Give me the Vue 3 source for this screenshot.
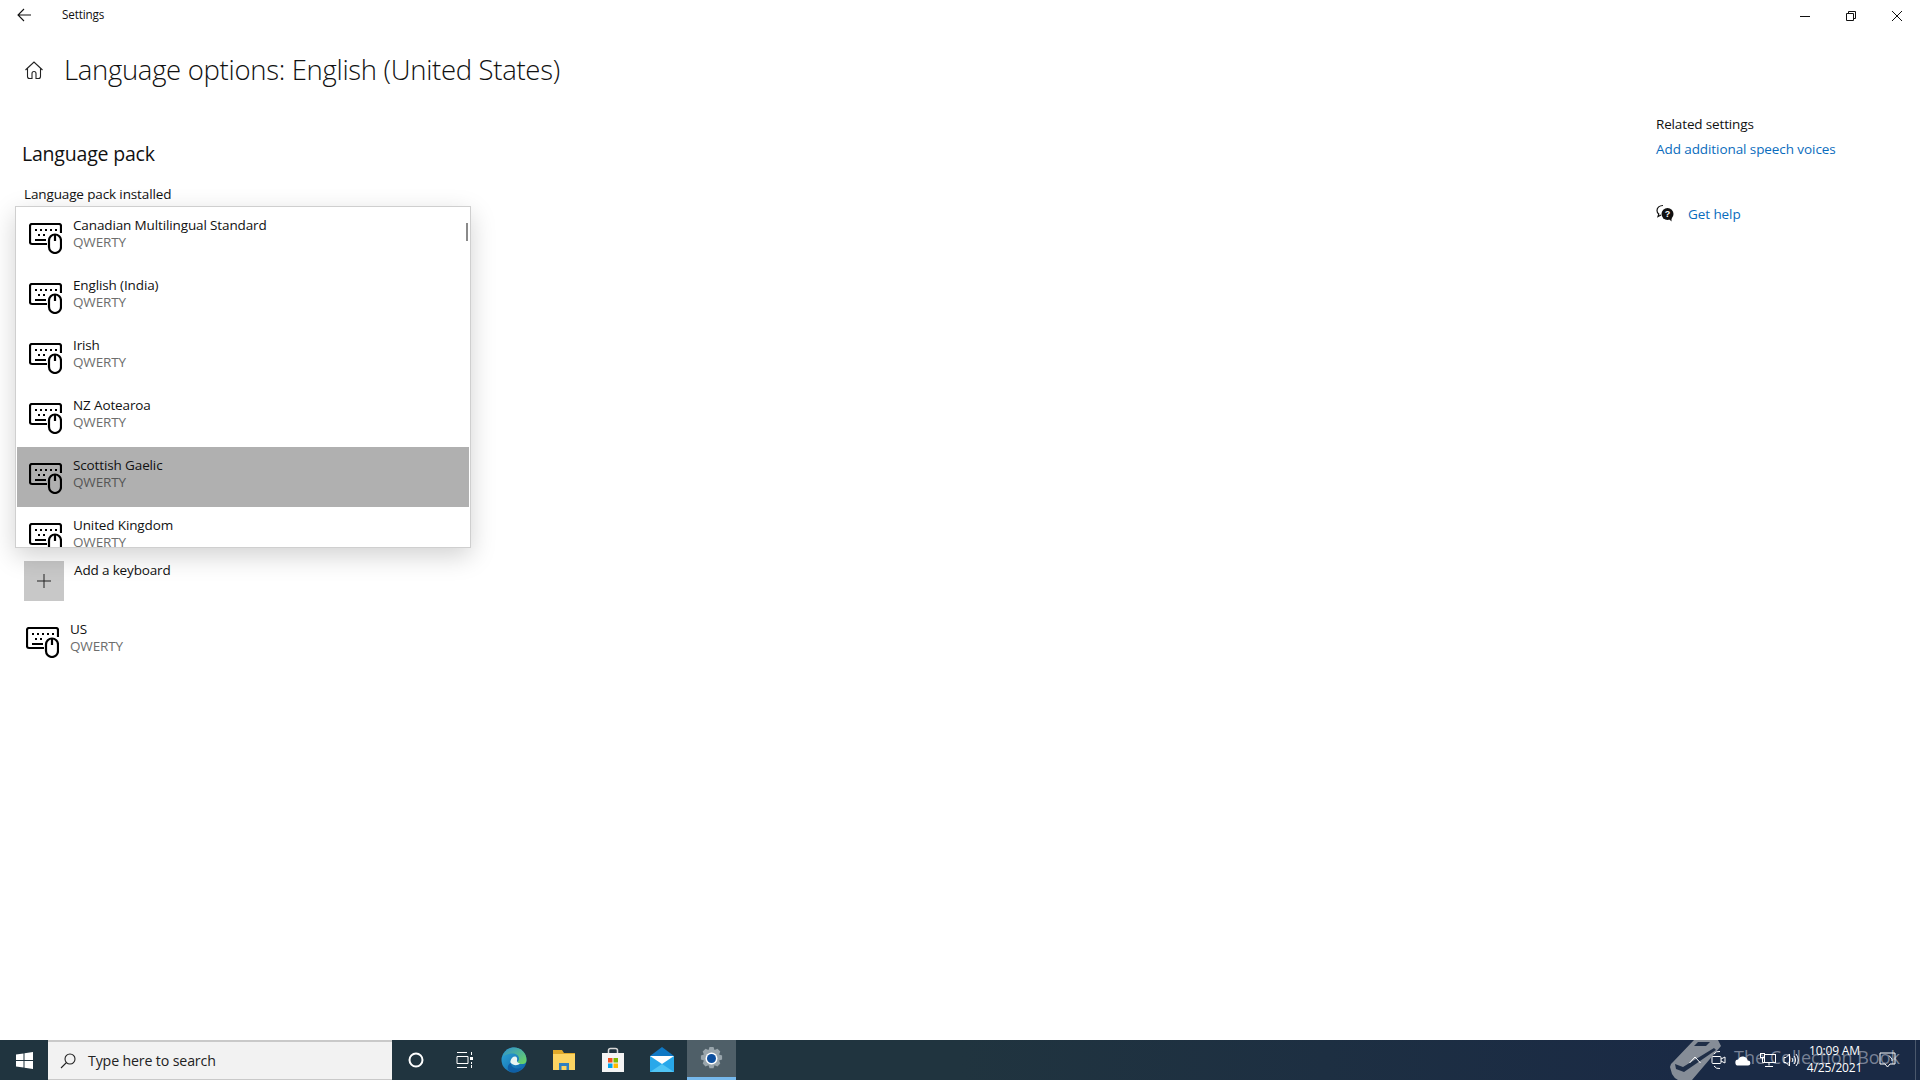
<script setup>
const layouts = ['Canadian Multilingual Standard', 'English (India)', 'Irish', 'NZ Aotearoa', 'Scottish Gaelic', 'United Kingdom']
</script>

<template>
  <div class="screen">
    <svg class="defs" width="0" height="0">
      <symbol id="kbd" viewBox="0 0 33 31">
        <g fill="none" stroke="#000" stroke-width="2.200">
          <path d="M18 21H3a2 2 0 0 1-2-2V3a2 2 0 0 1 2-2h27a2 2 0 0 1 2 2v7" />
          <rect x="20" y="11.500" width="12" height="18.500" rx="6" />
          <path d="M26 11v7M6 17h11" />
        </g>
        <g fill="#000">
          <rect x="6" y="6" width="2" height="2" /><rect x="11" y="6" width="2" height="2" />
          <rect x="16" y="6" width="2" height="2" /><rect x="21" y="6" width="2" height="2" />
          <rect x="26" y="6" width="2" height="2" /><rect x="9" y="11" width="2" height="2" />
          <rect x="14" y="11" width="2" height="2" />
        </g>
      </symbol>
    </svg>

    <header class="titlebar">
      <svg class="back" width="16" height="14" viewBox="0 0 16 14" fill="none" stroke="#111" stroke-width="1.100">
        <path d="M1 7h13M7 1 1 7l6 6" />
      </svg>
      <span class="app-name">Settings</span>
      <div class="win-controls">
        <svg width="12" height="12" viewBox="0 0 12 12" fill="none" stroke="#111"><path d="M1 6.500h10" /></svg>
        <svg width="12" height="12" viewBox="0 0 12 12" fill="none" stroke="#111"><path d="M1.500 3.500h7v7h-7zM3.500 3.500v-2h7v7h-2" /></svg>
        <svg width="12" height="12" viewBox="0 0 12 12" fill="none" stroke="#111"><path d="m1 1 10 10M11 1 1 11" /></svg>
      </div>
    </header>

    <main class="content">
      <section class="left">
        <div class="page-head">
          <svg width="20" height="20" viewBox="0 0 20 20" fill="none" stroke="#222" stroke-width="1.100">
            <path d="M1.500 10 10 2l8.500 8M3.500 8.500V16.500a2 2 0 0 0 2 2h2.500v-5a2 2 0 0 1 4 0v5h2.500a2 2 0 0 0 2-2V8.500" />
          </svg>
          <h1>Language options: English (United States)</h1>
        </div>
        <h2>Language pack</h2>
        <div class="installed">Language pack installed</div>

        <div class="add-row">
          <div class="plus-tile">
            <svg width="14" height="14" viewBox="0 0 14 14" stroke="#222" fill="none"><path d="M7 0v14M0 7h14" /></svg>
          </div>
          <span>Add a keyboard</span>
        </div>
        <div class="us-row">
          <svg class="kicon" width="33" height="31"><use href="#kbd" /></svg>
          <div class="row-text">
            <div class="row-title">US</div>
            <div class="row-sub">QWERTY</div>
          </div>
        </div>

        <div class="popup">
          <div class="scroll-thumb"></div>
          <div v-for="name in layouts" :key="name" class="row" :class="{ selected: name === 'Scottish Gaelic' }">
            <svg class="kicon" width="33" height="31"><use href="#kbd" /></svg>
            <div class="row-text">
              <div class="row-title">{{ name }}</div>
              <div class="row-sub">QWERTY</div>
            </div>
          </div>
        </div>
      </section>

      <aside class="right">
        <div class="related">Related settings</div>
        <a class="link">Add additional speech voices</a>
        <div class="help">
          <svg width="18" height="18" viewBox="0 0 18 18">
            <path d="M7 1.500C3.500 1.500 1 3.500 1 6.500c0 1.500.7 2.700 1.800 3.500L2 12.500l3-1.500" fill="none" stroke="#111" stroke-width="1.200" />
            <circle cx="11.500" cy="10" r="6" fill="#111" />
            <path d="m13 15 2.500 2.500V13z" fill="#111" />
            <text x="11.500" y="13" text-anchor="middle" font-size="9" font-weight="700" fill="#fff" font-family="Liberation Sans, sans-serif">?</text>
          </svg>
          <a class="link">Get help</a>
        </div>
      </aside>
    </main>

    <footer class="taskbar">
      <div class="start">
        <svg width="17" height="17" viewBox="0 0 17 17" fill="#fff">
          <path d="M0 2.500 7.500 1.400V8H0zM8.500 1.300 17 0v8H8.500zM0 9h7.500v6.600L0 14.500zM8.500 9H17v8l-8.500-1.300z" />
        </svg>
      </div>
      <div class="search">
        <svg width="16" height="16" viewBox="0 0 16 16" fill="none" stroke="#222" stroke-width="1.100">
          <circle cx="10" cy="6" r="5" /><path d="M6.500 9.500 1 15" />
        </svg>
        <span>Type here to search</span>
      </div>
      <div class="tb-icons">
        <div class="tb-item">
          <svg width="18" height="18" viewBox="0 0 18 18" fill="none" stroke="#fff" stroke-width="2"><circle cx="9" cy="9" r="6.500" /></svg>
        </div>
        <div class="tb-item">
          <svg width="18" height="18" viewBox="0 0 18 18" fill="none" stroke="#fff">
            <path d="M1 1.500h10M1 16.500h10M1 5.500h11v7H1zM15.500 1v3M15.500 14v3" /><rect x="14" y="6" width="3" height="3" fill="#fff" stroke="none" /><path d="M15.500 11v2" />
          </svg>
        </div>
        <div class="tb-item">
          <svg width="26" height="26" viewBox="0 0 26 26">
            <defs>
              <linearGradient id="edgeA" x1="0" y1="0" x2="1" y2="1">
                <stop offset="0" stop-color="#2fa9d8" /><stop offset="1" stop-color="#0d5fa8" />
              </linearGradient>
              <linearGradient id="edgeB" x1="0" y1="0" x2="1" y2="1">
                <stop offset="0" stop-color="#2f8fd0" /><stop offset="1" stop-color="#6ed85f" />
              </linearGradient>
            </defs>
            <circle cx="13" cy="13" r="12.500" fill="url(#edgeA)" />
            <path d="M2 9C4 3 9 .5 13 .5c7 0 12.500 5.500 12.500 12.500 0 2-1 4-4 4-3 0-5 0-5-2 1-1 1.500-2 1.500-3.500C18 8 14 6 10 6.500 6.500 7 3.500 8 2 9z" fill="url(#edgeB)" />
            <path d="M9.500 14c.5-3 3-5 5-4.500 1.500.5 2 2 1.500 3.500-.5 1.500 1 3 3 3.500-2 2-5 2-7 1-2-1-3-2-2.500-3.500z" fill="#eaf4f2" />
            <path d="M10 16c0 4 4 6 8 5.500l3-1c-2 3.500-5 5-8 5-3 0-5-1-6-3-1-3 1-6 3-6.500z" fill="#0f5fa6" />
          </svg>
        </div>
        <div class="tb-item">
          <svg width="24" height="22" viewBox="0 0 24 22">
            <path d="M1 1h9l2 3h11v3H1z" fill="#e0a92a" />
            <rect x="1" y="5" width="22" height="16" fill="#fcd462" />
            <rect x="7" y="14" width="10" height="7" fill="#2f7fc1" />
            <rect x="9.500" y="17" width="5" height="4" fill="#fcd462" />
          </svg>
        </div>
        <div class="tb-item">
          <svg width="24" height="26" viewBox="0 0 24 26">
            <path d="M7.500 7V3.500a2 2 0 0 1 2-2h5a2 2 0 0 1 2 2V7" fill="none" stroke="#d8d8d8" stroke-width="1.500" />
            <rect x="1" y="6" width="22" height="19" fill="#f4f4f4" />
            <rect x="7" y="11" width="4.500" height="4.500" fill="#f25022" /><rect x="12.500" y="11" width="4.500" height="4.500" fill="#7fba00" />
            <rect x="7" y="16.500" width="4.500" height="4.500" fill="#00a4ef" /><rect x="12.500" y="16.500" width="4.500" height="4.500" fill="#ffb900" />
          </svg>
        </div>
        <div class="tb-item">
          <svg width="24" height="26" viewBox="0 0 24 26">
            <path d="M12 0 24 9H0z" fill="#0f78c4" />
            <rect y="9" width="24" height="16" fill="#28a8ea" />
            <path d="M0 9h24L12 17z" fill="#fff" />
            <path d="m0 25 12-8 12 8z" fill="#50c5f5" />
          </svg>
        </div>
        <div class="tb-item active">
          <svg width="25" height="25" viewBox="0 0 25 25">
            <path d="M10.500 1h4l1 3 3-1.200 2.800 2.800-1.200 3 3 1v4l-3 1 1.200 3-2.800 2.800-3-1.200-1 3h-4l-1-3-3 1.200-2.800-2.800 1.200-3-3-1v-4l3-1-1.200-3 2.800-2.800 3 1.200z" fill="#99a5ac" />
            <circle cx="12.500" cy="12.500" r="6" fill="#fff" />
            <circle cx="12.500" cy="12.500" r="4.500" fill="#0d4f9e" />
          </svg>
        </div>
      </div>

      <div class="watermark">
        <svg width="56" height="40" viewBox="0 0 56 40">
          <path d="M26 0H50L53 6 24 40H10Q6 38 4 34L2 27Q2 24 5 22z" fill="#868d97" />
          <path d="M30 2H42L38 6 26 6z" fill="#1f2e47" />
          <path d="M7 24 15 27 46 8 48 10 16 32 8 29z" fill="#1f2e47" />
        </svg>
        <span>The Collection Book</span>
      </div>

      <div class="tray">
        <div class="cell"><svg width="12" height="8" viewBox="0 0 12 8" fill="none" stroke="#fff"><path d="m.5 7 5.500-6 5.500 6" /></svg></div>
        <div class="cell"><svg width="16" height="18" viewBox="0 0 16 18" fill="none" stroke="#fff">
          <path d="M3 3a6 6 0 0 1 6-2.500M3 15a6 6 0 0 0 6 2.500" /><rect x="1" y="5.500" width="9" height="7" rx="1" /><path d="M10 8l4-2v6l-4-2" />
        </svg></div>
        <div class="cell"><svg width="16" height="12" viewBox="0 0 16 12" fill="#fff">
          <path d="M3.500 11.500a3 3 0 0 1-.3-6 5 5 0 0 1 9.500 1A2.500 2.500 0 0 1 13 11.500z" />
        </svg></div>
        <div class="cell"><svg width="17" height="16" viewBox="0 0 17 16" fill="none" stroke="#fff">
          <rect x="1.500" y="1.500" width="4" height="4" /><rect x="5.500" y="2.500" width="11" height="8" /><path d="M3.500 5.500v5h2M10 10.500v3M6 14.500h8" />
        </svg></div>
        <div class="cell"><svg width="16" height="14" viewBox="0 0 16 14" fill="none" stroke="#fff">
          <path d="M1 4.500h2L6.500 1v12L3 9.500H1zM9 5a3 3 0 0 1 0 4M11 3a6 6 0 0 1 0 8M13 1a9 9 0 0 1 0 12" />
        </svg></div>
        <div class="clock"><div>10:09 AM</div><div>4/25/2021</div></div>
        <div class="cell wide"><svg width="17" height="16" viewBox="0 0 17 16" fill="none" stroke="#fff">
          <path d="M1 1h15v11h-5l-2.500 3L6 12H1z" /><path d="M10 3.500 13 7v2" />
        </svg></div>
        <div class="edge-line"></div>
      </div>
    </footer>
  </div>
</template>

<style>
html, body { margin: 0; background: #fff; }
</style>

<style scoped>
.defs { position: absolute; }
.screen {
  width: 1920px; height: 1080px; display: flex; flex-direction: column; overflow: hidden;
  background: #fff; color: #111; font-family: "Open Sans", "Noto Sans", sans-serif; font-size: 13.500px; letter-spacing: -0.15px;
}
.titlebar { height: 32px; flex: none; display: flex; align-items: center; padding-left: 17px; }
.back { margin-top: -2px; }
.app-name { margin-left: 29px; margin-top: -4px; font-size: 11.700px; }
.win-controls { margin-left: auto; display: flex; gap: 34px; padding-right: 17px; margin-top: -1px; }
.content { flex: 1; display: flex; justify-content: space-between; position: relative; }
.left { position: relative; width: 600px; }
.page-head { display: flex; align-items: center; gap: 20px; padding: 20px 0 0 24px; height: 35px; }
h1 { margin: 0; font-weight: 300; font-size: 27.500px; line-height: 35px; letter-spacing: -0.31px; white-space: nowrap; }
h2 { margin: 54px 0 0 22px; font-weight: 400; font-size: 19.500px; line-height: 26px; letter-spacing: -0.2px; }
.installed { margin: 18px 0 0 24px; line-height: 18px; letter-spacing: -0.13px; }
.add-row { display: flex; gap: 10px; margin: 358px 0 0 24px; }
.plus-tile { width: 40px; height: 40px; background: #c8c8c8; display: flex; align-items: center; justify-content: center; }
.add-row span { line-height: 18px; }
.us-row { display: flex; gap: 11px; margin: 26px 0 0 26px; }
.kicon { flex: none; }
.row-text { margin-top: -6px; }
.row-title { line-height: 17px; white-space: nowrap; letter-spacing: -0.13px; }
.row-sub { line-height: 17px; color: #6d6d6d; }
.popup {
  position: absolute; left: 15px; top: 174px; width: 452px; height: 340px; padding: 0 1px; overflow: hidden; background: #fff;
  border: 1px solid #cfcfcf; box-shadow: 0 8px 24px rgba(0, 0, 0, .18);
}
.scroll-thumb { position: absolute; right: 2px; top: 16px; width: 2px; height: 18px; background: #8a8a8a; }
.row { height: 60px; display: flex; gap: 11px; padding: 16px 0 0 12px; box-sizing: border-box; }
.row.selected { background: #b0b0b0; }
.row.selected .row-sub { color: #555; }
.right { width: 264px; padding-top: 81px; display: flex; flex-direction: column; }
.related { line-height: 22px; }
.link { color: #0a6cbd; line-height: 22px; margin-top: 3px; white-space: nowrap; letter-spacing: -0.08px; }
.help { display: flex; align-items: center; gap: 14px; margin-top: 40px; }
.taskbar {
  height: 40px; flex: none; display: flex; position: relative; color: #fff;
  background: linear-gradient(90deg, #20343f 0 50%, #1a2a45 88% 100%);
}
.start { width: 48px; display: flex; align-items: center; justify-content: center; }
.search {
  width: 344px; box-sizing: border-box; background: #f2f2f2; border-top: 2px solid #c9c9c9; border-bottom: 1px solid #c9c9c9;
  display: flex; align-items: center; gap: 12px; padding-left: 12px; color: #222; font-size: 14.200px;
}
.tb-icons { display: flex; margin-left: -1px; }
.tb-item { width: 49.330px; height: 40px; display: flex; align-items: center; justify-content: center; box-sizing: border-box; }
.active { background: #4f5f68; border-bottom: 3px solid #76b9ed; }
.tray { margin-left: auto; display: flex; align-items: center; padding-right: 12px; position: relative; z-index: 1; }
.cell { width: 24px; display: flex; justify-content: center; align-items: center; }
.cell.wide { width: 42px; }
.clock { font-size: 12px; line-height: 17px; text-align: center; width: 63px; margin-top: -2px; }
.edge-line { position: absolute; right: 4px; top: 0; bottom: 0; width: 1px; background: #4b586c; }
.watermark {
  position: absolute; left: 1668px; top: 0; height: 40px; display: flex; align-items: center; gap: 10px; color: rgba(185, 190, 205, .6);
  font-size: 18px; letter-spacing: 0; white-space: nowrap; pointer-events: none;
}
.watermark span { margin-top: -6px; }
</style>
